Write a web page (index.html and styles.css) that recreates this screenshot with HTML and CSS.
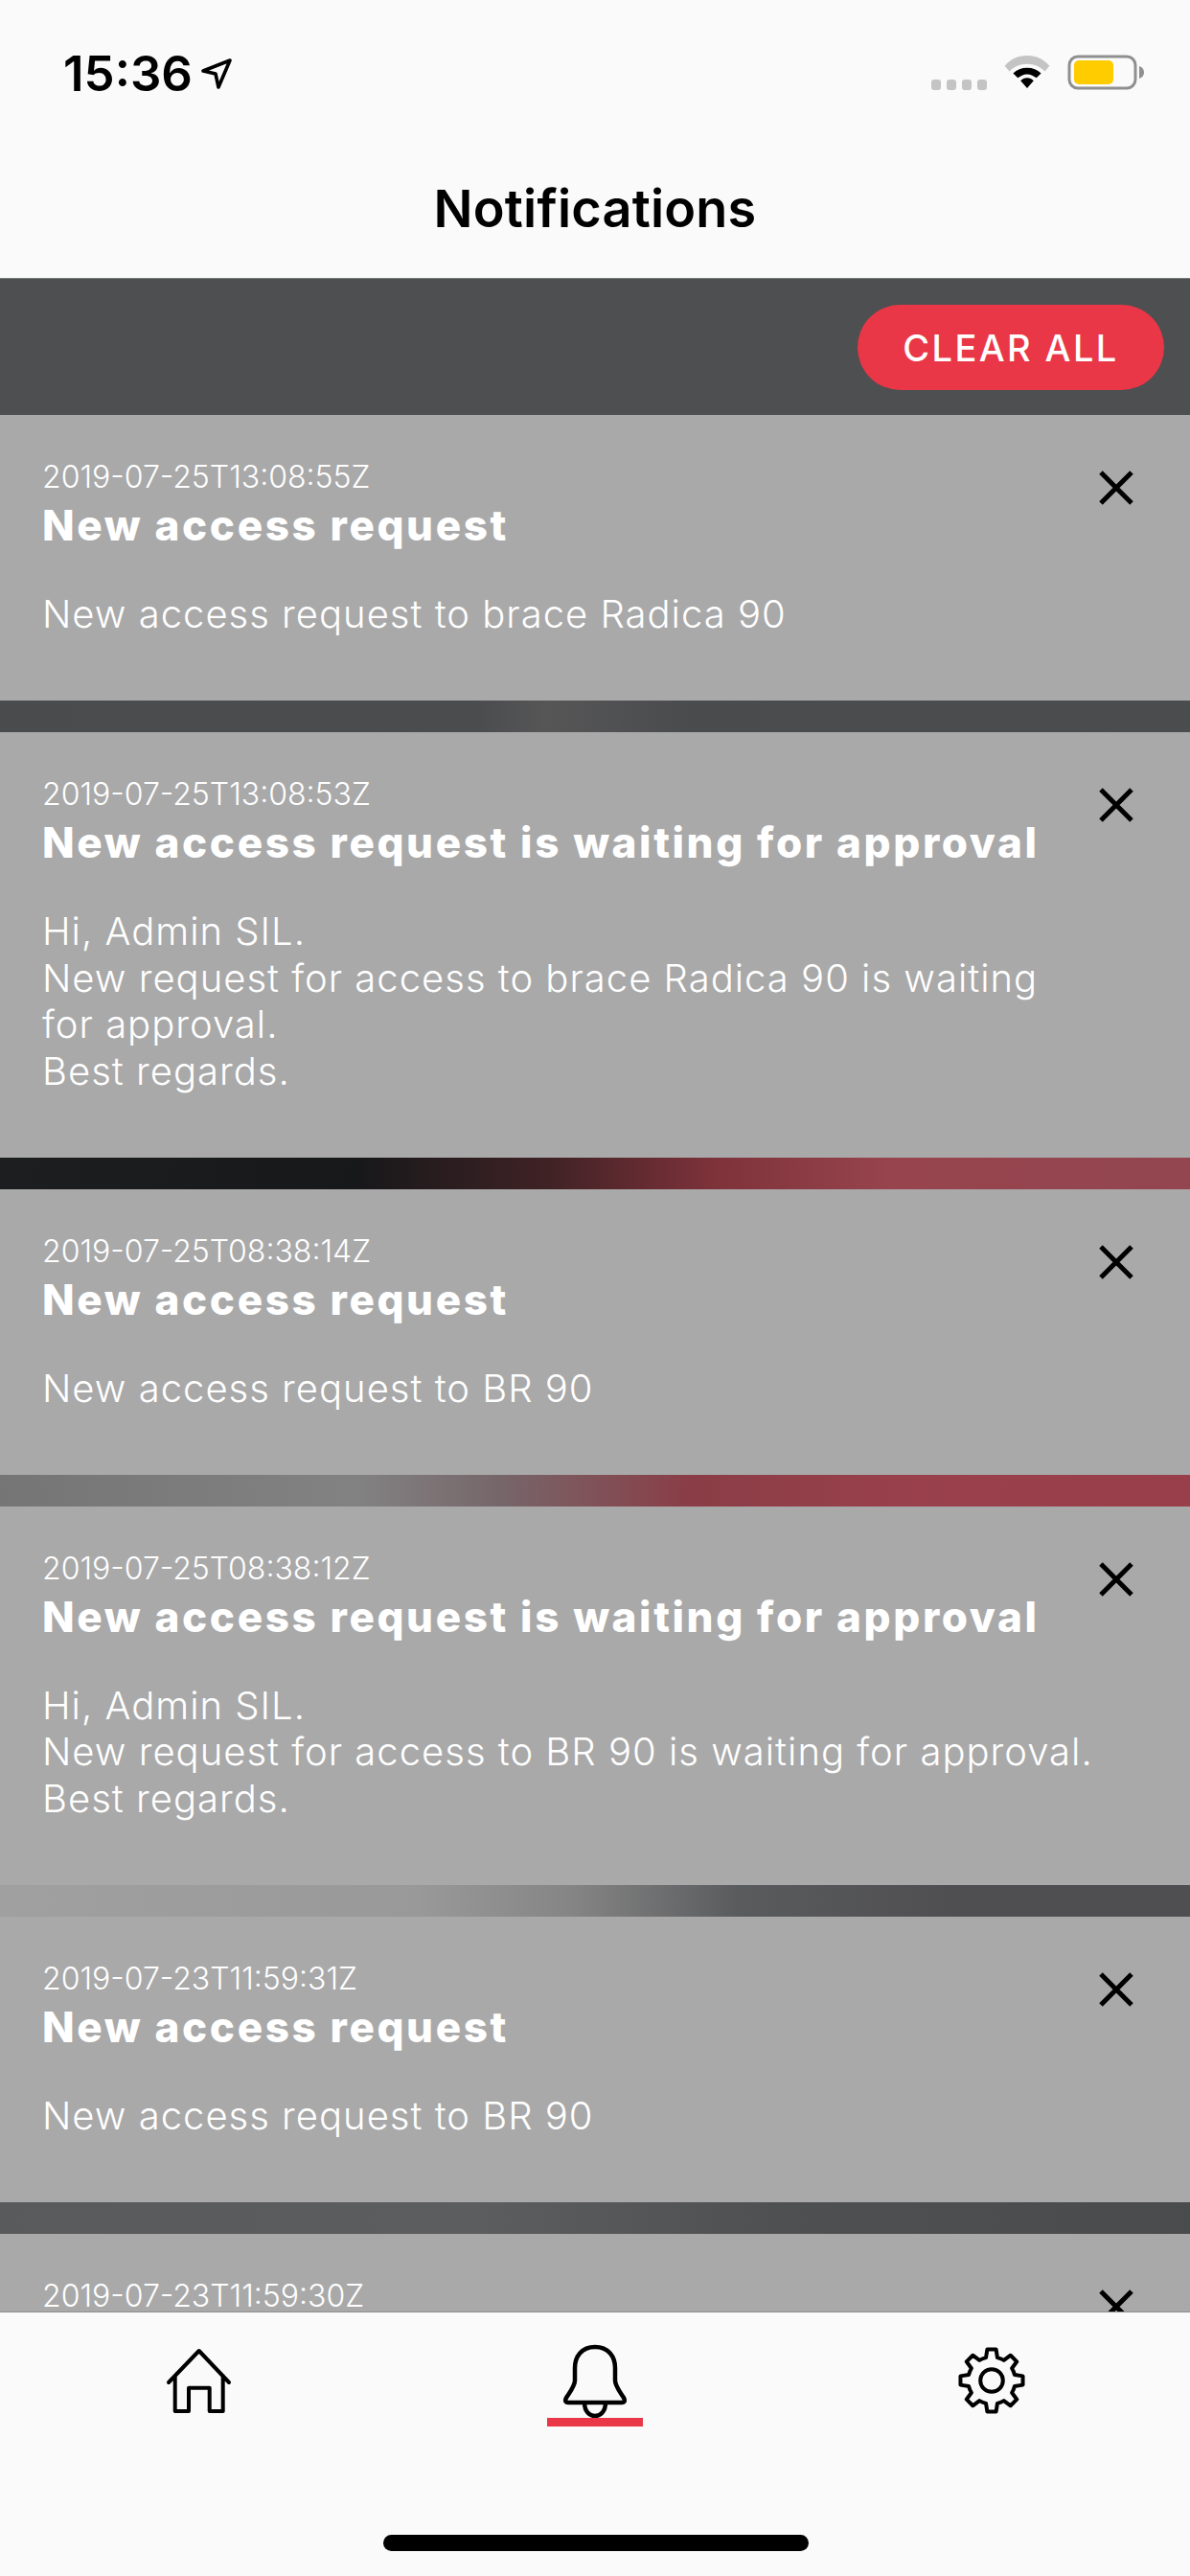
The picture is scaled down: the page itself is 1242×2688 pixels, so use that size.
FILE: index.html
```html
<!DOCTYPE html>
<html lang="en">
<head>
<meta charset="utf-8">
<title>Notifications</title>
<link rel="stylesheet" href="styles.css">
</head>
<body>
<div class="phone">
  <header class="top">
    <div class="status">
      <div class="clock">
        <span class="time">15:36</span>
        <svg class="loc" viewBox="0 0 34 34"><path d="M31 3 3 14 16 17 19 31Z" fill="none" stroke="#000" stroke-width="3.6" stroke-linejoin="round"/></svg>
      </div>
      <div class="indicators">
        <div class="dots"><i></i><i></i><i></i><i></i></div>
        <svg class="wifi" viewBox="0 0 50 38"><path d="M25 1C15 1 7 5 1 12l5 6c5-5 11-8 19-8s14 3 19 8l5-6C43 5 35 1 25 1Z" fill="#c4c4c4"/><path d="M25 14c-6 0-11 2-15 6l5 5c3-2 6-4 10-4s7 2 10 4l5-5c-4-4-9-6-15-6Z" fill="#000"/><path d="M25 25c-3 0-5 1-7 3l7 8 7-8c-2-2-4-3-7-3Z" fill="#000"/></svg>
        <svg class="battery" viewBox="0 0 81 37"><rect x="2" y="2" width="69" height="33" rx="9" fill="none" stroke="#8f8f8f" stroke-width="3"/><rect x="7" y="6" width="41" height="25" rx="5" fill="#fc0"/><path d="M75 12c3 1 5 3 5 6.500s-2 5.500-5 6.500Z" fill="#8f8f8f"/></svg>
      </div>
    </div>
    <h1 class="title">Notifications</h1>
  </header>

  <main class="content">
    <div class="toolbar"><button class="clear">CLEAR ALL</button></div>

    <article class="card">
      <div class="card-text">
        <div class="stamp">2019-07-25T13:08:55Z</div>
        <h2 class="head">New access request</h2>
        <p class="body">New access request to brace Radica 90</p>
      </div>
      <svg class="close" viewBox="0 0 38 38"><path d="M3 3 35 35M35 3 3 35"/></svg>
    </article>
    <div class="gap gap-a"></div>

    <article class="card">
      <div class="card-text">
        <div class="stamp">2019-07-25T13:08:53Z</div>
        <h2 class="head">New access request is waiting for approval</h2>
        <p class="body">Hi, Admin SIL.<br>New request for access to brace Radica 90 is waiting<br>for approval.<br>Best regards.</p>
      </div>
      <svg class="close" viewBox="0 0 38 38"><path d="M3 3 35 35M35 3 3 35"/></svg>
    </article>
    <div class="gap gap-b"></div>

    <article class="card">
      <div class="card-text">
        <div class="stamp">2019-07-25T08:38:14Z</div>
        <h2 class="head">New access request</h2>
        <p class="body">New access request to BR 90</p>
      </div>
      <svg class="close" viewBox="0 0 38 38"><path d="M3 3 35 35M35 3 3 35"/></svg>
    </article>
    <div class="gap gap-c"></div>

    <article class="card">
      <div class="card-text">
        <div class="stamp">2019-07-25T08:38:12Z</div>
        <h2 class="head">New access request is waiting for approval</h2>
        <p class="body">Hi, Admin SIL.<br>New request for access to BR 90 is waiting for approval.<br>Best regards.</p>
      </div>
      <svg class="close" viewBox="0 0 38 38"><path d="M3 3 35 35M35 3 3 35"/></svg>
    </article>
    <div class="gap gap-d"></div>

    <article class="card">
      <div class="card-text">
        <div class="stamp">2019-07-23T11:59:31Z</div>
        <h2 class="head">New access request</h2>
        <p class="body">New access request to BR 90</p>
      </div>
      <svg class="close" viewBox="0 0 38 38"><path d="M3 3 35 35M35 3 3 35"/></svg>
    </article>
    <div class="gap gap-e"></div>

    <article class="card">
      <div class="card-text">
        <div class="stamp">2019-07-23T11:59:30Z</div>
      </div>
      <svg class="close" viewBox="0 0 38 38"><path d="M3 3 35 35M35 3 3 35"/></svg>
    </article>
  </main>

  <footer class="tabs">
    <nav class="tab-row">
      <div class="tab">
        <svg class="ico home" viewBox="0 0 73 72"><path d="M5 38 36.700 5 68 38M11.700 31V68H26V43.700H47.700V68H61.700V31" fill="none" stroke="#000" stroke-width="4" stroke-linejoin="round" stroke-linecap="round"/></svg>
      </div>
      <div class="tab">
        <svg class="ico bell" viewBox="0 0 76 84"><path d="M38 7C24 7 17 17 17 29V42C17 48 11 55 8 60C6 64 8 65 10 65H66C68 65 70 64 68 60C65 55 59 48 59 42V29C59 17 52 7 38 7ZM27 65C27 74 32 79 38 79S49 74 49 65" fill="none" stroke="#000" stroke-width="4.500" stroke-linejoin="round"/></svg>
        <span class="underline"></span>
      </div>
      <div class="tab">
        <svg class="ico gear" viewBox="0 0 76 76"><path d="M32.200 14.700 33.500 6.300H42.500L43.800 14.700A24 24 0 0 1 50.400 17.400L57.200 12.400 63.600 18.800 58.600 25.600A24 24 0 0 1 61.300 32.200L69.700 33.500V42.500L61.300 43.800A24 24 0 0 1 58.600 50.400L63.600 57.200 57.200 63.600 50.400 58.600A24 24 0 0 1 43.800 61.300L42.500 69.700H33.500L32.200 61.300A24 24 0 0 1 25.600 58.600L18.800 63.600 12.400 57.200 17.400 50.400A24 24 0 0 1 14.700 43.800L6.300 42.500V33.500L14.700 32.200A24 24 0 0 1 17.400 25.600L12.400 18.800 18.800 12.400 25.600 17.400A24 24 0 0 1 32.200 14.700Z" fill="none" stroke="#000" stroke-width="3.900" stroke-linejoin="round"/><circle cx="38" cy="38" r="11.500" fill="none" stroke="#000" stroke-width="3.900"/></svg>
      </div>
    </nav>
    <div class="home-bar"></div>
  </footer>
</div>
</body>
</html>
```

FILE: styles.css
```css
* { box-sizing: border-box; }
html, body { margin: 0; padding: 0; }
body { width: 1242px; height: 2688px; overflow: hidden; background: #fafafa; }
.phone { width: 1242px; height: 2688px; display: flex; flex-direction: column; font-family: Inter, "Liberation Sans", sans-serif; }

.top { height: 291px; flex: none; background: #fafafa; border-bottom: 1px solid #77787a; display: flex; flex-direction: column; }
.status { height: 120px; padding: 48px 47px 0 66px; display: flex; justify-content: space-between; align-items: flex-start; }
.clock { display: flex; align-items: center; gap: 8px; margin-top: 2px; }
.time { font-size: 51px; font-weight: 600; line-height: 54px; color: #000; }
.loc { width: 34px; height: 34px; }
.indicators { display: flex; align-items: flex-end; gap: 17px; margin-top: 9px; }
.dots { display: flex; gap: 6px; }
.dots i { width: 10px; height: 11px; border-radius: 3px; background: #c4c4c4; }
.wifi { width: 50px; height: 37px; }
.battery { width: 81px; height: 37px; }
.title { margin: 65px 0 0; text-align: center; font-size: 54px; font-weight: 600; line-height: 66px; letter-spacing: 0.2px; color: #000; }

.content { flex: 1; min-height: 0; overflow: hidden; background: #4e4f51; }
.toolbar { height: 142px; padding: 27px 27px 0 0; display: flex; justify-content: flex-end; align-items: flex-start; background: #4e4f51; }
.clear { width: 320px; height: 89px; border: 0; border-radius: 45px; background: #ea3747; color: #fff; font-family: inherit; font-size: 38px; font-weight: 500; letter-spacing: 2.400px; padding: 0; }

.card { background: #a9a9a9; padding: 49px 0 0 44px; display: flex; justify-content: space-between; align-items: flex-start; }
.card-text { flex: 1; padding-bottom: 65.500px; }
.stamp { font-size: 32px; font-weight: 300; line-height: 32px; color: #fff; }
.head { margin: 7px 0 0; font-size: 44px; font-weight: 800; line-height: 54px; letter-spacing: 2.600px; color: #fff; }
.body { margin: 42px 0 0; font-size: 40px; font-weight: 300; line-height: 48.500px; letter-spacing: 1px; color: #fff; }
.close { width: 38px; height: 38px; margin: 8px 58px 0 0; flex: none; stroke: #000; stroke-width: 5; fill: none; }

.gap { height: 33px; }
.gap-a { background: linear-gradient(90deg, #4a4b4d 0%, #4b4c4e 40%, #565657 46%, #4a4b4d 58%, #4b4c4e 100%); }
.gap-b { background: linear-gradient(90deg, #1d1e20 0%, #17181a 30%, #3f2225 46%, #7e323a 60%, #97444e 75%, #934650 100%); }
.gap-c { background: linear-gradient(90deg, #757575 0%, #828282 30%, #76666a 42%, #8a3d46 58%, #98404c 75%, #983f4b 100%); }
.gap-d { background: linear-gradient(90deg, #a0a0a0 0%, #999 35%, #858585 48%, #5a5b5d 62%, #4f4f51 80%, #4f4f51 100%); }
.gap-e { background: linear-gradient(90deg, #595a5c 0%, #5c5d5f 40%, #4f5052 65%, #4a4b4d 100%); }

.tabs { height: 276px; flex: none; background: #fafafa; border-top: 1px solid #8e8e8e; display: flex; flex-direction: column; align-items: center; }
.tab-row { width: 100%; height: 100px; display: grid; grid-template-columns: 1fr 1fr 1fr; margin-top: 27px; }
.tab { position: relative; display: flex; justify-content: center; align-items: flex-start; }
.ico { display: block; }
.home { width: 73px; height: 72px; margin-top: 8px; }
.bell { width: 76px; height: 84px; margin-top: 2px; }
.gear { width: 78px; height: 78px; margin-top: 5px; }
.underline { position: absolute; left: 50%; top: 83px; width: 100px; height: 9px; margin-left: -50px; background: #ea3747; }
.home-bar { width: 444px; height: 17px; border-radius: 9px; background: #000; margin: 105px 0 0 2px; }
```
